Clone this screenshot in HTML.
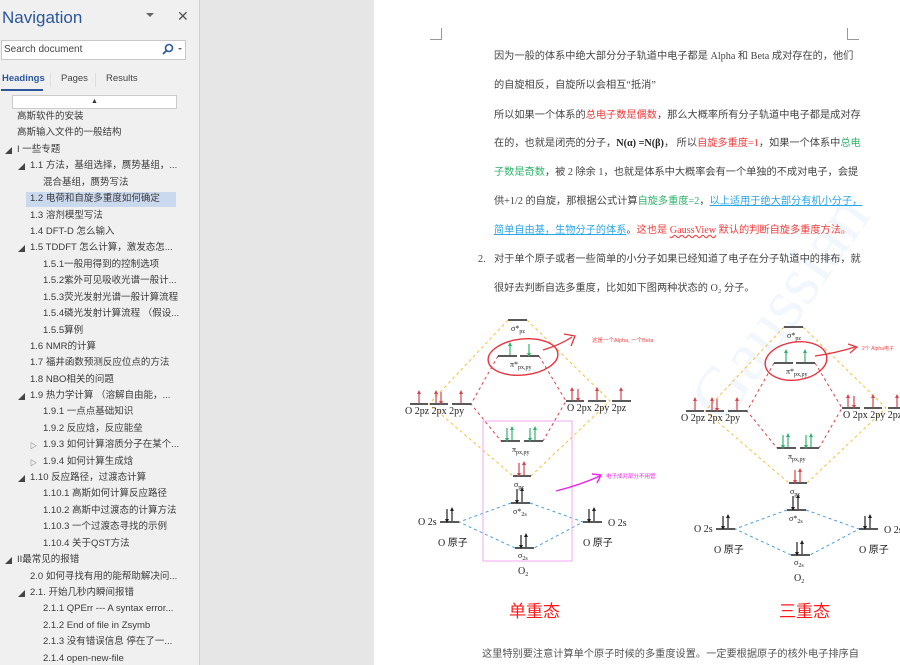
<!DOCTYPE html>
<html><head><meta charset="utf-8">
<style>
*{margin:0;padding:0;box-sizing:border-box}
body{width:900px;height:665px;overflow:hidden;position:relative;background:#e6e6e6;font-family:"Liberation Sans","Noto Sans CJK SC",sans-serif}
#nav{position:absolute;left:0;top:0;width:200px;height:665px;background:#f0f0f0;border-right:1px solid #d0d0d0}
.t{position:absolute;font-size:9.5px;color:#3a3a3a;white-space:nowrap;line-height:12px}
.tri{position:absolute;font-size:7px;color:#444}
#page{position:absolute;left:374px;top:0;width:526px;height:665px;background:#fff;overflow:hidden}
.d{position:absolute;font-family:"Liberation Serif","Noto Sans CJK SC",sans-serif;font-size:10.2px;color:#444;white-space:nowrap;line-height:14px}
.r{color:#f03c3c}.g{color:#2fb36a}.b{color:#2aa5e6;text-decoration:underline}
</style></head><body>
<div id="nav">
<div style="position:absolute;left:2px;top:8px;font-size:17px;color:#2b579a">Navigation</div>
<div style="position:absolute;left:146px;top:13px;width:0;height:0;border-left:4px solid transparent;border-right:4px solid transparent;border-top:4px solid #666"></div>
<div style="position:absolute;left:177px;top:8px;font-size:14px;color:#555">✕</div>
<div style="position:absolute;left:1px;top:40px;width:185px;height:20px;background:#fff;border:1px solid #c8c8c8"></div>
<div style="position:absolute;left:4px;top:44px;font-size:10px;color:#444">Search document</div>
<svg style="position:absolute;left:160px;top:42px" width="25" height="14"><circle cx="9" cy="6" r="3.5" fill="none" stroke="#2b579a" stroke-width="1.6"/><line x1="6.5" y1="8.5" x2="3" y2="12" stroke="#2b579a" stroke-width="1.8"/><path d="M18 6l4 0l-2 2z" fill="#666"/></svg>
<div style="position:absolute;left:2px;top:73px;font-size:9.5px;color:#2b579a;font-weight:bold">Headings</div>
<div style="position:absolute;left:1px;top:89px;width:42px;height:2px;background:#2b579a"></div>
<div style="position:absolute;left:50px;top:73px;width:1px;height:14px;background:#ddd"></div>
<div style="position:absolute;left:61px;top:73px;font-size:9.5px;color:#444">Pages</div>
<div style="position:absolute;left:95px;top:73px;width:1px;height:14px;background:#ddd"></div>
<div style="position:absolute;left:106px;top:73px;font-size:9.5px;color:#444">Results</div>
<div style="position:absolute;left:12px;top:95px;width:165px;height:14px;background:#fff;border:1px solid #ccc;text-align:center;font-size:7px;color:#333;line-height:12px">▲</div>
<div style="position:absolute;left:26px;top:192px;width:150px;height:15px;background:#cbd9ee"></div>
<div class="t" style="left:17px;top:111px">高斯软件的安装</div>
<div class="t" style="left:17px;top:127px">高斯输入文件的一般结构</div>
<div class="tri" style="left:5px;top:146px">◢</div><div class="t" style="left:17px;top:144px">I 一些专题</div>
<div class="tri" style="left:18px;top:162px">◢</div><div class="t" style="left:30px;top:160px">1.1 方法，基组选择，赝势基组，...</div>
<div class="t" style="left:43px;top:177px">混合基组，赝势写法</div>
<div class="t" style="left:30px;top:193px">1.2 电荷和自旋多重度如何确定</div>
<div class="t" style="left:30px;top:210px">1.3 溶剂模型写法</div>
<div class="t" style="left:30px;top:226px">1.4 DFT-D 怎么输入</div>
<div class="tri" style="left:18px;top:244px">◢</div><div class="t" style="left:30px;top:242px">1.5 TDDFT 怎么计算，激发态怎...</div>
<div class="t" style="left:43px;top:259px">1.5.1一般用得到的控制选项</div>
<div class="t" style="left:43px;top:275px">1.5.2紫外可见吸收光谱一般计...</div>
<div class="t" style="left:43px;top:292px">1.5.3荧光发射光谱一般计算流程</div>
<div class="t" style="left:43px;top:308px">1.5.4磷光发射计算流程 （假设...</div>
<div class="t" style="left:43px;top:325px">1.5.5算例</div>
<div class="t" style="left:30px;top:341px">1.6 NMR的计算</div>
<div class="t" style="left:30px;top:357px">1.7 福井函数预测反应位点的方法</div>
<div class="t" style="left:30px;top:374px">1.8 NBO相关的问题</div>
<div class="tri" style="left:18px;top:392px">◢</div><div class="t" style="left:30px;top:390px">1.9 热力学计算 （溶解自由能，...</div>
<div class="t" style="left:43px;top:406px">1.9.1 一点点基础知识</div>
<div class="t" style="left:43px;top:423px">1.9.2 反应焓，反应能垒</div>
<div class="tri" style="left:30px;top:441px">▷</div><div class="t" style="left:43px;top:439px">1.9.3 如何计算溶质分子在某个...</div>
<div class="tri" style="left:30px;top:458px">▷</div><div class="t" style="left:43px;top:456px">1.9.4 如何计算生成焓</div>
<div class="tri" style="left:18px;top:474px">◢</div><div class="t" style="left:30px;top:472px">1.10 反应路径，过渡态计算</div>
<div class="t" style="left:43px;top:488px">1.10.1 高斯如何计算反应路径</div>
<div class="t" style="left:43px;top:505px">1.10.2 高斯中过渡态的计算方法</div>
<div class="t" style="left:43px;top:521px">1.10.3 一个过渡态寻找的示例</div>
<div class="t" style="left:43px;top:538px">1.10.4 关于QST方法</div>
<div class="tri" style="left:5px;top:556px">◢</div><div class="t" style="left:17px;top:554px">II最常见的报错</div>
<div class="t" style="left:30px;top:571px">2.0 如何寻找有用的能帮助解决问...</div>
<div class="tri" style="left:18px;top:589px">◢</div><div class="t" style="left:30px;top:587px">2.1. 开始几秒内瞬间报错</div>
<div class="t" style="left:43px;top:603px">2.1.1 QPErr --- A syntax error...</div>
<div class="t" style="left:43px;top:620px">2.1.2 End of file in Zsymb</div>
<div class="t" style="left:43px;top:636px">2.1.3 没有错误信息 停在了一...</div>
<div class="t" style="left:43px;top:653px">2.1.4 open-new-file</div>
</div>
<div id="page">
<div style="position:absolute;left:67px;top:28px;width:1px;height:12px;background:#999"></div>
<div style="position:absolute;left:56px;top:39px;width:12px;height:1px;background:#999"></div>
<div style="position:absolute;left:473px;top:28px;width:1px;height:12px;background:#999"></div>
<div style="position:absolute;left:473px;top:39px;width:12px;height:1px;background:#999"></div>
<div style="position:absolute;left:300px;top:390px;transform:rotate(-55deg);transform-origin:0 0;font-family:'Liberation Serif',serif;font-size:70px;color:#f1f7fd;white-space:nowrap">Gaussian</div>
</div>
<div class="d" style="left:494px;top:50px">因为一般的体系中绝大部分分子轨道中电子都是 Alpha 和 Beta 成对存在的，他们</div>
<div class="d" style="left:494px;top:79px">的自旋相反，自旋所以会相互“抵消”</div>
<div class="d" style="left:494px;top:109px">所以如果一个体系的<span class="r">总电子数是偶数</span>，那么大概率所有分子轨道中电子都是成对存</div>
<div class="d" style="left:494px;top:137px">在的，也就是闭壳的分子，<b style="color:#222">N(α) =N(β)</b>， 所以<span class="r">自旋多重度=1</span>，如果一个体系中<span class="g">总电</span></div>
<div class="d" style="left:494px;top:166px"><span class="g">子数是奇数</span>，被 2 除余 1，也就是体系中大概率会有一个单独的不成对电子，会提</div>
<div class="d" style="left:494px;top:195px">供+1/2 的自旋，那根据公式计算<span class="g">自旋多重度=2</span>，<span class="b">以上适用于绝大部分有机小分子，</span></div>
<div class="d" style="left:494px;top:224px"><span class="b">简单自由基，生物分子的体系</span>。<span class="r">这也是 <u style="text-decoration:underline wavy">GaussView</u> 默认的判断自旋多重度方法。</span></div>
<div class="d" style="left:478px;top:253px">2.</div>
<div class="d" style="left:494px;top:253px">对于单个原子或者一些简单的小分子如果已经知道了电子在分子轨道中的排布，就</div>
<div class="d" style="left:494px;top:282px">很好去判断自选多重度，比如如下图两种状态的 O₂ 分子。</div>
<svg style="position:absolute;left:0;top:0" width="900" height="665" font-family="Liberation Serif,serif" font-size="10">
<defs>
<marker id="ar" markerWidth="4" markerHeight="4" refX="2" refY="2" orient="auto" markerUnits="userSpaceOnUse"><path d="M0,0L4,2L0,4z" fill="#d9434b"/></marker>
<marker id="ag" markerWidth="4" markerHeight="4" refX="2" refY="2" orient="auto" markerUnits="userSpaceOnUse"><path d="M0,0L4,2L0,4z" fill="#2fb36a"/></marker>
<marker id="ak" markerWidth="4" markerHeight="4" refX="2" refY="2" orient="auto" markerUnits="userSpaceOnUse"><path d="M0,0L4,2L0,4z" fill="#222"/></marker>
<g id="base">
<g stroke-dasharray="3,3" fill="none" stroke-width="1">
<polyline points="508,320 429,404 513,476" stroke="#f5c040"/>
<polyline points="527,320 610,401 531,476" stroke="#f5c040"/>
<polyline points="498,356 471,404 501,441" stroke="#d9434b"/>
<polyline points="539,356 566,401 543,441" stroke="#d9434b"/>
<polyline points="511,503 459,522 515,548" stroke="#4a9ee0"/>
<polyline points="530,503 583,522 534,548" stroke="#4a9ee0"/>
</g>
<g stroke="#222" stroke-width="1.6">
<line x1="508" y1="320" x2="527" y2="320"/>
<line x1="498" y1="356" x2="517" y2="356"/><line x1="520" y1="356" x2="539" y2="356"/>
<line x1="410" y1="404" x2="428" y2="404"/><line x1="430" y1="404" x2="448" y2="404"/><line x1="452" y1="404" x2="471" y2="404"/>
<line x1="566" y1="401" x2="584" y2="401"/><line x1="588" y1="401" x2="606" y2="401"/><line x1="612" y1="401" x2="631" y2="401"/>
<line x1="501" y1="441" x2="520" y2="441"/><line x1="524" y1="441" x2="543" y2="441"/>
<line x1="513" y1="476" x2="531" y2="476"/>
<line x1="511" y1="503" x2="530" y2="503"/>
<line x1="440" y1="522" x2="459" y2="522"/><line x1="583" y1="522" x2="602" y2="522"/>
<line x1="515" y1="548" x2="534" y2="548"/>
</g>
<g stroke-width="1.2">
<g stroke="#d9434b" marker-end="url(#ar)">
<line x1="419" y1="403" x2="419" y2="392"/><line x1="436" y1="403" x2="436" y2="392"/><line x1="441" y1="392" x2="441" y2="403"/><line x1="461" y1="403" x2="461" y2="392"/>
<line x1="572" y1="400" x2="572" y2="389"/><line x1="578" y1="389" x2="578" y2="400"/><line x1="597" y1="400" x2="597" y2="389"/><line x1="621" y1="400" x2="621" y2="389"/>
<line x1="519" y1="463" x2="519" y2="475"/><line x1="524" y1="475" x2="524" y2="463"/>
</g>
<g stroke="#2fb36a" marker-end="url(#ag)">
<line x1="507" y1="428" x2="507" y2="440"/><line x1="512" y1="440" x2="512" y2="428"/>
<line x1="530" y1="428" x2="530" y2="440"/><line x1="535" y1="440" x2="535" y2="428"/>
</g>
<g stroke="#222" marker-end="url(#ak)">
<line x1="517" y1="489" x2="517" y2="502"/><line x1="522" y1="502" x2="522" y2="489"/>
<line x1="447" y1="509" x2="447" y2="521"/><line x1="452" y1="521" x2="452" y2="509"/>
<line x1="589" y1="509" x2="589" y2="521"/><line x1="594" y1="521" x2="594" y2="509"/>
<line x1="521" y1="535" x2="521" y2="547"/><line x1="526" y1="547" x2="526" y2="535"/>
</g>
</g>
<g fill="#222">
<text x="511" y="331" font-size="8">σ*<tspan font-size="6" dy="2">pz</tspan></text>
<text x="510" y="367" font-size="8">π*<tspan font-size="6" dy="2">px,py</tspan></text>
<text x="512" y="452" font-size="8">π<tspan font-size="6" dy="2">px,py</tspan></text>
<text x="514" y="487" font-size="8">σ<tspan font-size="6" dy="2">pz</tspan></text>
<text x="513" y="514" font-size="8">σ*<tspan font-size="6" dy="2">2s</tspan></text>
<text x="518" y="558" font-size="8">σ<tspan font-size="6" dy="2">2s</tspan></text>
<text x="405" y="414">O 2pz  2px 2py</text>
<text x="567" y="411">O 2px 2py  2pz</text>
<text x="418" y="525">O 2s</text>
<text x="608" y="526">O 2s</text>
<text x="438" y="546" font-family="Liberation Serif,Noto Sans CJK SC,serif">O 原子</text>
<text x="583" y="546" font-family="Liberation Serif,Noto Sans CJK SC,serif">O 原子</text>
<text x="518" y="574">O<tspan font-size="6" dy="2">2</tspan></text>
</g>
</g>
</defs>
<use href="#base"/>
<g stroke="#2fb36a" stroke-width="1.2" marker-end="url(#ag)"><line x1="510" y1="355" x2="510" y2="344"/><line x1="529" y1="344" x2="529" y2="355"/></g>
<ellipse cx="523" cy="357" rx="35" ry="18" fill="none" stroke="#e8333d" stroke-width="1.4" transform="rotate(-6 523 357)"/>
<path d="M543 350 Q560 345 572 337 M564 334 L575 336 L571 346" fill="none" stroke="#e8333d" stroke-width="1.3"/>
<text x="592" y="342" font-size="5.5" fill="#f04848" font-family="Liberation Sans,Noto Sans CJK SC,sans-serif">这是一个Alpha, 一个Beta</text>
<rect x="483" y="421" width="89" height="140" fill="none" stroke="#f0a8f0" stroke-width="1"/>
<path d="M556 491 Q580 485 600 476 M592 474 L601 475 L597 483" fill="none" stroke="#ee22ee" stroke-width="1.4"/>
<text x="606" y="478" font-size="5.5" fill="#ee22ee" font-family="Liberation Sans,Noto Sans CJK SC,sans-serif">电子成对部分不用管</text>
<g transform="translate(276,7)">
<use href="#base"/>
<g stroke="#2fb36a" stroke-width="1.2" marker-end="url(#ag)"><line x1="510" y1="355" x2="510" y2="344"/><line x1="529" y1="355" x2="529" y2="344"/></g>
<ellipse cx="520" cy="354" rx="31" ry="19" fill="none" stroke="#e8333d" stroke-width="1.4" transform="rotate(-8 520 354)"/>
<path d="M539 349 Q560 346 579 340 M572 337 L581 340 L574 346" fill="none" stroke="#e8333d" stroke-width="1.2"/>
</g>
<text x="862" y="350" font-size="5" fill="#f04848" font-family="Liberation Sans,Noto Sans CJK SC,sans-serif">2个 Alpha电子</text>
<text x="509" y="617" font-size="17" fill="#ff1a1a" font-family="Noto Sans CJK SC,sans-serif">单重态</text>
<text x="779" y="617" font-size="17" fill="#ff1a1a" font-family="Noto Sans CJK SC,sans-serif">三重态</text>
</svg>
<div class="d" style="left:482px;top:648px;color:#555">这里特别要注意计算单个原子时候的多重度设置。一定要根据原子的核外电子排序自</div>
</body></html>
